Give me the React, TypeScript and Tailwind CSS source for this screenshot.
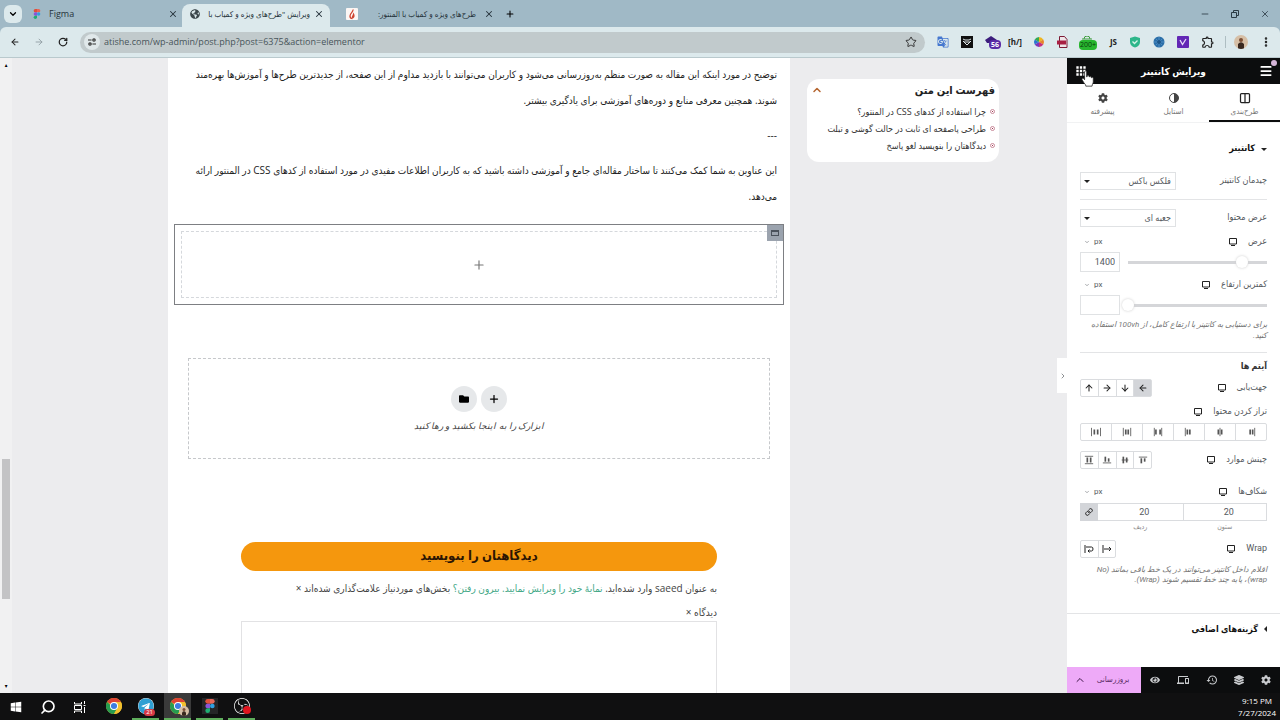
import React, { useState } from 'react';
import {
  ArrowDown,
  ArrowLeft,
  ArrowRight,
  ArrowUp,
  ChevronDown,
  ChevronLeft,
  ChevronUp,
  Columns2,
  EllipsisVertical,
  Link,
  Menu,
  Minus,
  Plus,
  RotateCw,
  Search,
  Star,
  X,
} from 'lucide-react';
import { FaCog, FaEye, FaFolder, FaGlobeAmericas, FaLayerGroup, FaTelegram, FaWindows } from 'react-icons/fa';
import { MdApps, MdDevices, MdGTranslate, MdHistory, MdOutlineExtension } from 'react-icons/md';
import { SiObsstudio } from 'react-icons/si';

const UI_FONT = "font-['Open_Sans','DejaVu_Sans_Condensed','DejaVu_Sans',sans-serif]";
const PANEL_FONT = "font-['Roboto','DejaVu_Sans_Condensed','DejaVu_Sans',sans-serif]";

/* ---------- Logos ---------- */

const FigmaLogo = ({ className }: { className?: string }) => (
  <svg viewBox="0 0 16 24" className={className}>
    <path d="M4 0h4v8H4a4 4 0 0 1 0-8z" fill="#e0503a" />
    <path d="M8 0h4a4 4 0 0 1 0 8H8z" fill="#e5685a" />
    <path d="M4 8h4v8H4a4 4 0 0 1 0-8z" fill="#8a55d8" />
    <circle cx="12" cy="12" r="4" fill="#2f9fe0" />
    <path d="M4 16h4v4a4 4 0 1 1-4-4z" fill="#1fae74" />
  </svg>
);

const ChromeLogo = ({ className }: { className?: string }) => (
  <svg viewBox="0 0 24 24" className={className}>
    <circle cx="12" cy="12" r="12" fill="#f2c02e" />
    <path d="M12 12 1.6 6A12 12 0 0 1 22.4 6z" fill="#dd4334" />
    <path d="M1.6 6A12 12 0 0 0 12 24l5.2-9H12z" fill="#279c50" />
    <path d="M12 6h10.4A12 12 0 0 1 12 24l5.2-9z" fill="#f2c02e" />
    <circle cx="12" cy="12" r="6" fill="#fff" />
    <circle cx="12" cy="12" r="4.6" fill="#3d7de0" />
  </svg>
);

const HandCursor = () => (
  <svg viewBox="0 0 16 20" className="absolute top-3 left-3.5 z-10 h-[17px] w-3.5">
    <path
      d="M4 2.2c0-1.6 2.4-1.6 2.4 0V8l.6-.1V7c0-1 2.1-1 2.2.2v1l.5-.1c.2-1 2-.8 2.1.4v.7l.5-.1c.3-.8 1.9-.6 1.9.8V14c0 2-1.4 2.6-1.4 5H5.4c0-2-1.2-2.6-2.2-4L1 11.4c-.6-1.2.8-2.2 1.8-1.3L4 11.4z"
      fill="#fff"
      stroke="#222"
      strokeWidth=".9"
    />
  </svg>
);

/* ---------- Browser ---------- */

const Tab = ({ icon, title, rtl, active, className }: { icon: React.ReactNode; title: string; rtl?: boolean; active?: boolean; className: string }) => (
  <div className={`flex items-center pb-1 text-[#26333b] ${active ? 'rounded-t-lg bg-[#dce9ec]' : ''} ${className}`}>
    {icon}
    <span dir={rtl ? 'rtl' : 'ltr'} className="min-w-0 flex-1 whitespace-nowrap">
      {title}
    </span>
    <button aria-label="Close tab">
      <X className="size-2.5" strokeWidth={2.5} />
    </button>
  </div>
);

const Browser = () => (
  <header className="shrink-0 bg-[#a0b9c6]">
    <div className="flex h-[27px] items-stretch pt-1 pl-1">
      <button aria-label="Search tabs" className="mt-px grid h-[18px] w-[18px] place-items-center rounded-md bg-[#dce9ec]">
        <ChevronDown className="size-2.5" strokeWidth={3} />
      </button>
      <Tab className="ml-[3px] w-[157px] gap-2 pr-1 pl-2 text-[9px]" icon={<FigmaLogo className="h-2.5 w-2" />} title="Figma" />
      <Tab
        className="w-[148px] gap-1 pr-1.5 pl-2 text-[8px]"
        active
        rtl
        icon={<FaGlobeAmericas className="size-2.5 shrink-0 text-[#3c474c]" />}
        title="ویرایش &quot;طرح‌های ویژه و کمیاب با"
      />
      <Tab
        className="ml-4 w-[152px] gap-2 pr-1 text-[8px]"
        rtl
        icon={
          <svg viewBox="0 0 12 12" className="size-3 shrink-0">
            <rect width="12" height="12" rx="1" fill="#fbf6f4" />
            <path d="M7 1.500C7.500 4 4 5 4 8c0 1.600 1 2.600 2.400 2.600" fill="none" stroke="#cf4430" strokeWidth="1.300" />
            <path d="M7 4.500c2 1.500 2.500 5.500-.6 6.100C4.500 9 7.500 7.500 7 4.500z" fill="#cf4430" />
          </svg>
        }
        title="طرح‌های ویژه و کمیاب با المنتور:"
      />
      <button aria-label="New tab" className="mb-1 ml-px px-1.5">
        <Plus className="size-2.5" strokeWidth={2.5} />
      </button>
      <div className="mr-2.5 mb-1 ml-auto flex items-center gap-5 text-[#2c3b44]">
        <button aria-label="Minimize"><Minus className="size-2.5" /></button>
        <button aria-label="Restore">
          <svg viewBox="0 0 10 10" className="size-2.5" fill="none" stroke="currentColor">
            <path d="M1.500 3.500h5v5h-5zM3.500 3V1.500h5v5H7" />
          </svg>
        </button>
        <button aria-label="Close"><X className="size-2.5" /></button>
      </div>
    </div>

    <div className="flex h-[31px] items-center rounded-t-md border-b border-[#b9c9cd] bg-[#dce9ec] pr-2 pl-2.5 text-[#222]">
      <div className="flex gap-3.5">
        <button aria-label="Back"><ArrowLeft className="size-2.5" strokeWidth={2.5} /></button>
        <button aria-label="Forward" className="text-[#8b999e]"><ArrowRight className="size-2.5" /></button>
        <button aria-label="Reload"><RotateCw className="size-2.5" strokeWidth={3} /></button>
      </div>
      <div className="ml-3 flex h-[21px] flex-1 items-center rounded-full bg-[#c1cacc] pr-2 pl-1">
        <span className="grid size-4 shrink-0 place-items-center rounded-full bg-[#e0e8ea]">
          <svg viewBox="0 0 10 10" className="size-2" fill="none" stroke="#333" strokeWidth="1.500">
            <path d="M0 2.500h4.500M5.500 7.500H10" />
            <circle cx="7.500" cy="2.500" r="1.500" />
            <circle cx="2.500" cy="7.500" r="1.500" />
          </svg>
        </span>
        <input
          aria-label="Address"
          readOnly
          value="atishe.com/wp-admin/post.php?post=6375&action=elementor"
          className="ml-1 w-full bg-transparent text-[9px] text-[#48555a] outline-none"
        />
        <button aria-label="Bookmark"><Star className="size-3 text-[#333]" /></button>
      </div>
      <div className="ml-3 flex items-center gap-3">
        <MdGTranslate className="size-3 text-[#4678cf]" />
        <svg viewBox="0 0 12 12" className="size-3">
          <rect width="12" height="12" fill="#111" />
          <path d="M2 3l2 1h4l2-1M2 5l4 4 4-4M3 6h6" fill="none" stroke="#dfe8ea" />
        </svg>
        <span className="relative size-3">
          <svg viewBox="0 0 12 12" className="size-3"><path d="M6 0l6 4-2 3H2L0 4z" fill="#3b1c7c" /></svg>
          <span className="absolute top-1 left-1 rounded-sm bg-[#5a2ba6] px-0.5 text-[7px] leading-[9px] font-bold text-white">56</span>
        </span>
        <span className="flex w-3 justify-center text-[8px] leading-3 font-bold whitespace-nowrap">[h/]</span>
        <svg viewBox="0 0 12 12" className="size-3">
          <path d="M6 6V1a5 5 0 0 1 4.300 2.500z" fill="#f0b51e" />
          <path d="M6 6l4.300-2.500a5 5 0 0 1 0 5z" fill="#e8842a" />
          <path d="M6 6l4.300 2.500A5 5 0 0 1 6 11z" fill="#c62f7e" />
          <path d="M6 6v5a5 5 0 0 1-4.300-2.500z" fill="#7b35b8" />
          <path d="M6 6L1.700 8.500a5 5 0 0 1 0-5z" fill="#2b74cf" />
          <path d="M6 6L1.700 3.500A5 5 0 0 1 6 1z" fill="#34a853" />
        </svg>
        <svg viewBox="0 0 12 12" className="size-3">
          <path d="M2.500.5h5l2.500 3v8h-7.500z" fill="#efe5e8" stroke="#7c1a35" />
          <rect x="0" y="4.500" width="9" height="4" fill="#a81f42" />
        </svg>
        <span className="relative size-3">
          <svg viewBox="0 0 12 12" className="size-3" fill="none" stroke="#3c9c3c"><path d="M1 3h10M3 3a3 3 0 0 1 6 0" /></svg>
          <span className="absolute top-1 -left-0.5 rounded-sm bg-[#28b62f] px-px text-[7px] leading-[10px] text-[#083c0c]">200+</span>
        </span>
        <span className="flex w-3 justify-end text-[8px] leading-3 font-bold">JS</span>
        <svg viewBox="0 0 12 12" className="size-3">
          <path d="M6 .5l5 1.500v4c0 3-2 4.500-5 5.500C3 10.500 1 9 1 6V2z" fill="#2db68a" />
          <path d="M3.500 5.500l2 2 3-3" fill="none" stroke="#d7f3e8" strokeWidth="1.300" />
        </svg>
        <svg viewBox="0 0 12 12" className="size-3">
          <circle cx="6" cy="6" r="5.500" fill="#2a6ea8" />
          <path d="M6 1v10M1 6h10M2.500 2.500l7 7M9.500 2.500l-7 7" stroke="#5b9acb" strokeWidth=".7" />
          <circle cx="6" cy="6" r="2" fill="#1d5587" />
        </svg>
        <svg viewBox="0 0 12 12" className="size-3">
          <rect width="12" height="12" rx="1" fill="#6227b5" />
          <path d="M3 4l2.500 4.500L9 3" fill="none" stroke="#e6dcf6" strokeWidth="1.300" />
        </svg>
        <MdOutlineExtension className="size-3.5" />
        <span className="-ml-0.5 h-3 w-px bg-[#aebec2]" />
        <svg viewBox="0 0 14 14" className="-ml-1 size-3.5">
          <circle cx="7" cy="7" r="7" fill="#d6bfa6" />
          <circle cx="7" cy="5" r="2" fill="#7b4f35" />
          <path d="M4 13.200V9q3-3.500 6 0v4.200a7 7 0 0 1-6 0z" fill="#39281f" />
        </svg>
        <button aria-label="Menu"><EllipsisVertical className="size-3" strokeWidth={3} /></button>
      </div>
    </div>
  </header>
);

/* ---------- Page being edited ---------- */

const toc = ['چرا استفاده از کدهای CSS در المنتور؟', 'طراحی پاصفحه ای ثابت در حالت گوشی و تبلت', 'دیدگاهتان را بنویسید لغو پاسخ'];

const Preview = () => (
  <div className="flex min-w-0 flex-1 bg-[#ececee]">
    <div className="flex w-3 shrink-0 flex-col items-center bg-[#f1f1f2] py-1 text-[6px] leading-none text-black">
      <span>▴</span>
      <div className="mt-[391px] h-[140px] w-2 bg-[#c3c3c5]" />
      <span className="mt-auto">▾</span>
    </div>

    <main dir="rtl" className="ml-[156px] flex min-w-0 flex-1 flex-col overflow-hidden bg-white pt-[3px] text-[#222]">
      <article className="space-y-[9px] px-[13px] text-[10px] leading-[26px] whitespace-nowrap">
        <p>
          توضیح در مورد اینکه این مقاله به صورت منظم به‌روزرسانی می‌شود و کاربران می‌توانند با بازدید مداوم از این صفحه، از جدیدترین طرح‌ها و آموزش‌ها بهره‌مند
          <br />
          شوند. همچنین معرفی منابع و دوره‌های آموزشی برای یادگیری بیشتر.
        </p>
        <p>---</p>
        <p>
          این عناوین به شما کمک می‌کنند تا ساختار مقاله‌ای جامع و آموزشی داشته باشید که به کاربران اطلاعات مفیدی در مورد استفاده از کدهای CSS در المنتور ارائه
          <br />
          می‌دهد.
        </p>
      </article>

      <section className="relative mx-1.5 mt-[15px] border border-[#7d7f83] p-1.5">
        <button aria-label="Edit container" className="absolute top-0 right-0 grid size-4 place-items-center bg-[#9ba3ae]">
          <span className="h-1.5 w-2 border border-t-2 border-[#4a515b]" />
        </button>
        <div className="grid h-[67px] place-items-center border border-dashed border-[#d5d8dc]">
          <Plus className="size-3.5 text-[#777]" />
        </div>
      </section>

      <section className="mx-5 mt-[53px] flex h-[101px] shrink-0 flex-col items-center border border-dashed border-[#c6c8cb] pt-[27px]">
        <div className="flex gap-1">
          <button aria-label="Add section" className="grid size-[26px] place-items-center rounded-full bg-[#e6e8ea] text-black">
            <Plus className="size-3" strokeWidth={2.5} />
          </button>
          <button aria-label="Template library" className="grid size-[26px] place-items-center rounded-full bg-[#e6e8ea] text-black">
            <FaFolder className="size-2.5" />
          </button>
        </div>
        <p className="mt-2 text-[9px] leading-3 text-[#444] italic">ابزارک را به اینجا بکشید و رها کنید</p>
      </section>

      <section className="mx-[73px] mt-[83px] text-[10px] text-[#444]">
        <h3 className="rounded-full bg-[#f5970d] pb-[3px] text-center text-[13px] leading-[26px] font-bold text-[#2b1503]">دیدگاهتان را بنویسید</h3>
        <p className="mt-[7px] leading-5 whitespace-nowrap">
          به عنوان saeed وارد شده‌اید.{' '}
          <a href="#profile" className="text-[#45a888]">نمایهٔ خود را ویرایش نمایید.</a>{' '}
          <a href="#logout" className="text-[#45a888]">بیرون رفتن؟</a> بخش‌های موردنیاز علامت‌گذاری شده‌اند ×
        </p>
        <label htmlFor="comment" className="mt-[6px] block leading-4">دیدگاه ×</label>
        <textarea id="comment" className="mt-px block h-24 w-full resize-none border border-[#e2e2e4]" />
      </section>
    </main>

    <aside dir="rtl" className="mt-[21px] mr-[68px] ml-[17px] w-48 shrink-0 self-start rounded-xl bg-white px-1 pt-0.5 pb-2">
      <div className="flex items-center justify-between">
        <h4 className="text-[11px] leading-[18px] font-bold text-[#222]">فهرست این متن</h4>
        <button aria-label="Toggle table of contents"><ChevronUp className="size-3 text-[#b5652f]" strokeWidth={3} /></button>
      </div>
      <ul className="mt-1 text-[9px] text-[#333]">
        {toc.map((item) => (
          <li key={item} className="flex h-[17px] items-center gap-1 whitespace-nowrap">
            <span className="grid size-[5px] place-items-center rounded-full border border-[#c98a9a]">
              <span className="size-px bg-[#a13650]" />
            </span>
            <a href="#toc">{item}</a>
          </li>
        ))}
      </ul>
    </aside>
  </div>
);

/* ---------- Elementor panel ---------- */

const DeviceIcon = () => (
  <svg viewBox="0 0 10 10" className="size-2.5" fill="none" stroke="#222">
    <path d="M1.500 1.500h7v5.500h-7zM3 8.500h4" />
  </svg>
);

const Label = ({ children, device = true, htmlFor }: { children: React.ReactNode; device?: boolean; htmlFor?: string }) => (
  <label htmlFor={htmlFor} className="flex items-center gap-2.5 whitespace-nowrap">
    {children}
    {device && <DeviceIcon />}
  </label>
);

const Unit = () => (
  <button dir="ltr" className="flex items-center gap-1 pl-1 text-[8px]">
    <ChevronDown className="size-1.5" /> px
  </button>
);

const SelectRow = ({ id, label, value, className }: { id: string; label: string; value: string; className: string }) => (
  <div className={`flex items-center justify-between ${className}`}>
    <Label htmlFor={id} device={false}>{label}</Label>
    <div className="relative">
      <select id={id} className="block h-[18px] w-24 appearance-none border border-[#e0e2e4] bg-white px-1 text-[9px] leading-4">
        <option>{value}</option>
      </select>
      <span className="pointer-events-none absolute top-2 left-1 border-x-3 border-t-3 border-x-transparent border-t-[#222]" />
    </div>
  </div>
);

const SliderRow = ({ id, label, value, initial }: { id: string; label: string; value: string; initial: number }) => {
  const [pos, setPos] = useState(initial);
  return (
    <>
      <div className="flex h-3 items-center justify-between">
        <Label htmlFor={id}>{label}</Label>
        <Unit />
      </div>
      <div dir="ltr" className="mt-1 flex items-center">
        <input id={id} defaultValue={value} className="h-5 w-10 shrink-0 border border-[#e0e2e4] pr-1 text-right" />
        <input
          type="range"
          aria-label={label}
          value={pos}
          onChange={(e) => setPos(Number(e.target.value))}
          className="ml-0.5 h-3.5 min-w-0 flex-1 appearance-none bg-[linear-gradient(#d5d6d9,#d5d6d9)] bg-[length:calc(100%-6px)_3px] bg-right bg-no-repeat [&::-webkit-slider-thumb]:size-3 [&::-webkit-slider-thumb]:appearance-none [&::-webkit-slider-thumb]:rounded-full [&::-webkit-slider-thumb]:bg-white [&::-webkit-slider-thumb]:shadow-[0_0_3px_#ccc]"
        />
      </div>
    </>
  );
};

// vertical bars drawn as [x, y, width, height] in a 12x12 box
const justify: [string, number[][]][] = [
  ['شروع', [[4, 3, 2, 6], [7, 3, 2, 6], [10, 1, 1, 10]]],
  ['وسط', [[3, 3, 2, 6], [5.5, 1, 1, 10], [7, 3, 2, 6]]],
  ['پایان', [[1, 1, 1, 10], [3, 3, 2, 6], [6, 3, 2, 6]]],
  ['فاصله بین', [[1, 1, 1, 10], [2.5, 3, 2, 6], [7.5, 3, 2, 6], [10, 1, 1, 10]]],
  ['فاصله اطراف', [[1, 1, 1, 10], [3.5, 3, 2, 6], [6.5, 3, 2, 6], [10, 1, 1, 10]]],
  ['فاصله یکسان', [[0, 1, 1, 10], [3, 3, 2, 6], [7, 3, 2, 6], [11, 1, 1, 10]]],
];

const align: [string, number[][]][] = [
  ['بالا', [[1, 2, 10, 1], [3, 4, 2, 6], [7, 4, 2, 4]]],
  ['میانه', [[2, 5.5, 8, 1], [3, 2, 2, 8], [7, 3, 2, 6]]],
  ['پایین', [[1, 9, 10, 1], [3, 2, 2, 6], [7, 4, 2, 4]]],
  ['کشیده', [[1, 1, 10, 1], [3, 3, 2, 6], [7, 3, 2, 6], [1, 10, 10, 1]]],
];

const Bars = ({ rects }: { rects: number[][] }) => (
  <svg viewBox="0 0 12 12" className="size-2.5" fill="#555">
    {rects.map(([x, y, w, h]) => (
      <rect key={`${x}-${y}`} x={x} y={y} width={w} height={h} />
    ))}
  </svg>
);

const directions = [
  { name: 'ردیف', Icon: ArrowLeft },
  { name: 'ستون', Icon: ArrowDown },
  { name: 'ردیف معکوس', Icon: ArrowRight },
  { name: 'ستون معکوس', Icon: ArrowUp },
];

const groupCls = 'flex h-[18px] divide-x divide-[#dadcdf] border border-[#dadcdf] rounded-xs';

const Panel = () => {
  const [direction, setDirection] = useState(0);

  return (
    <aside dir="rtl" className={`relative flex w-[213px] shrink-0 flex-col bg-white text-[9px] text-[#55595e] ${PANEL_FONT}`}>
      <button aria-label="Hide panel" className="absolute top-[300px] -left-[10px] grid h-[35px] w-[11px] place-items-center bg-white">
        <ChevronLeft className="size-2 rotate-180" />
      </button>

      <header className="relative flex h-[26px] items-center justify-between bg-[#0c0d0e] px-[7px] text-white">
        <button aria-label="Menu" className="relative">
          <Menu className="size-3.5" strokeWidth={3} />
          <span className="absolute -top-1 -right-1 size-1.5 rounded-full bg-[#d5b5d8]" />
        </button>
        <h2 className="text-[10px] font-bold">ویرایش کانتینر</h2>
        <div dir="ltr">
          <button aria-label="Widgets" className="block"><MdApps className="size-3.5" /></button>
          <HandCursor />
        </div>
      </header>

      <nav className="grid h-[39px] grid-cols-3 border-b border-[#f1f2f3] text-[8px] text-[#777]">
        <button className="flex flex-col items-center gap-0.5 border-b-2 border-[#0c0d0e] pt-2">
          <Columns2 className="size-3 text-[#222]" strokeWidth={2.5} /> طرح‌بندی
        </button>
        <button className="flex flex-col items-center gap-0.5 pt-2">
          <svg viewBox="0 0 12 12" className="size-3 text-[#444]">
            <circle cx="6" cy="6" r="4.500" fill="none" stroke="currentColor" />
            <path d="M6 1.500a4.500 4.500 0 0 1 0 9z" fill="currentColor" />
          </svg>
          استایل
        </button>
        <button className="flex flex-col items-center gap-0.5 pt-2">
          <FaCog className="my-px size-2.5 text-[#444]" /> پیشرفته
        </button>
      </nav>

      <div className="flex-1 px-[13px] pt-[13px]">
        <button className="flex h-[26px] items-center gap-1.5 font-bold text-[#111]">
          <span className="border-x-3 border-t-3 border-x-transparent border-t-[#222]" /> کانتینر
        </button>
        <SelectRow id="layout" label="چیدمان کانتینر" value="فلکس باکس" className="h-[38px] border-b border-[#e3e4e6]" />
        <SelectRow id="content-width" label="عرض محتوا" value="جعبه ای" className="h-9" />
        <SliderRow id="width" label="عرض" value="1400" initial={86} />
        <div className="h-[7px]" />
        <SliderRow id="min-height" label="کمترین ارتفاع" value="" initial={0} />
        <p className="mt-1 pb-[11px] text-[8px] leading-[11px] text-[#777] italic">
          برای دستیابی به کانتینر با ارتفاع کامل، از 100vh استفاده کنید.
        </p>

        <h3 className="border-t border-[#e3e4e6] leading-[26px] font-bold text-[#333]">آیتم ها</h3>
        <div className="flex items-center justify-between">
          <Label>جهت‌یابی</Label>
          <div className={`w-[72px] ${groupCls}`}>
            {directions.map(({ name, Icon }, i) => (
              <button
                key={name}
                aria-label={name}
                onClick={() => setDirection(i)}
                className={`grid flex-1 place-items-center text-[#222] ${direction === i ? 'bg-[#d3d5d9]' : ''}`}
              >
                <Icon className="size-2.5" strokeWidth={2.5} />
              </button>
            ))}
          </div>
        </div>
        <div className="mt-2 flex h-3.5 items-center"><Label>تراز کردن محتوا</Label></div>
        <div className={`mt-1 ${groupCls}`}>
          {justify.map(([name, rects]) => (
            <button key={name} aria-label={name} className="grid flex-1 place-items-center"><Bars rects={rects} /></button>
          ))}
        </div>
        <div className="mt-2.5 flex items-center justify-between">
          <Label>چینش موارد</Label>
          <div className={`w-[72px] ${groupCls}`}>
            {align.map(([name, rects]) => (
              <button key={name} aria-label={name} className="grid flex-1 place-items-center"><Bars rects={rects} /></button>
            ))}
          </div>
        </div>

        <div className="mt-4 flex h-3.5 items-center justify-between">
          <Label>شکاف‌ها</Label>
          <Unit />
        </div>
        <div className="mt-1 flex">
          <div className="flex-1 text-center">
            <input id="gap-column" defaultValue="20" className="block h-[18px] w-full border border-[#dadcdf] pl-2 text-center" />
            <label htmlFor="gap-column" className="block text-[7px] leading-3 text-[#888]">ستون</label>
          </div>
          <div className="flex-1 text-center">
            <input id="gap-row" defaultValue="20" className="block h-[18px] w-full border-y border-[#dadcdf] pl-2 text-center" />
            <label htmlFor="gap-row" className="block text-[7px] leading-3 text-[#888]">ردیف</label>
          </div>
          <button aria-label="Link values" className="grid h-[18px] w-[18px] place-items-center bg-[#d3d5d9] text-[#222]">
            <Link className="size-2" strokeWidth={3} />
          </button>
        </div>

        <div className="mt-[7px] flex items-center justify-between">
          <Label>Wrap</Label>
          <div className={`w-9 ${groupCls}`}>
            <button aria-label="No wrap" className="grid flex-1 place-items-center">
              <svg viewBox="0 0 10 10" className="size-2.5" fill="none" stroke="#222"><path d="M1 1v8M2 5h7M7 3l2 2-2 2" /></svg>
            </button>
            <button aria-label="Wrap" className="grid flex-1 place-items-center">
              <svg viewBox="0 0 10 10" className="size-2.5" fill="none" stroke="#222"><path d="M1 1v8M2 3h5.500q1.500 0 1.500 2T7.500 7H4M5.500 5.500L4 7l1.500 1.500" /></svg>
            </button>
          </div>
        </div>
        <p className="mt-[7px] text-[8px] leading-[10px] text-[#777] italic">
          اقلام داخل کانتینر می‌توانند در یک خط باقی بمانند (No wrap)، یا به چند خط تقسیم شوند (Wrap).
        </p>
      </div>

      <button className="flex h-[54px] items-start gap-1.5 border-t border-[#e3e4e6] px-[13px] pt-2 leading-[14px] font-bold text-[#111]">
        <span className="mt-1 border-y-3 border-r-3 border-y-transparent border-r-[#222]" /> گزینه‌های اضافی
      </button>

      <footer className="flex h-[26px] shrink-0 items-stretch bg-[#0c0d0e] text-[#c9cbce]">
        <div className="flex flex-1 items-center justify-between px-[9px]">
          <button aria-label="Settings"><FaCog className="size-2.5" /></button>
          <button aria-label="Structure"><FaLayerGroup className="size-2.5" /></button>
          <button aria-label="History"><MdHistory className="size-3" /></button>
          <button aria-label="Responsive"><MdDevices className="size-3" /></button>
          <button aria-label="Preview"><FaEye className="size-2.5" /></button>
        </div>
        <button className="w-[52px] bg-[#eeaaf8] pr-1 text-[8px] text-[#5b2c66]">بروزرسانی</button>
        <button aria-label="Save options" className="grid w-[22px] place-items-center bg-[#eeaaf8] pl-1 text-[#3b1545]">
          <ChevronUp className="size-3" />
        </button>
      </footer>
    </aside>
  );
};

/* ---------- Windows taskbar ---------- */

const appCls = 'grid w-[27px] place-items-center border-b-2 mr-[5px]';

const Taskbar = () => (
  <footer className="flex h-[27px] shrink-0 items-stretch bg-[#101011] text-white">
    <button aria-label="Start" className="grid w-8 place-items-center"><FaWindows className="size-3" /></button>
    <button aria-label="Search" className="grid w-8 place-items-center"><Search className="size-4 -scale-x-100" strokeWidth={2.5} /></button>
    <button aria-label="Task view" className="mr-1 grid w-8 place-items-center">
      <svg viewBox="0 0 12 12" className="size-3" fill="none" stroke="#fff">
        <path d="M.5 1v2h7V1M.5 4.500h7v4h-7zM.5 12v-2h7v2M10.500 0v3M10.500 6v6M9.500 4.500h2" />
      </svg>
    </button>
    <button aria-label="Chrome" className={`${appCls} border-transparent`}><ChromeLogo className="size-4" /></button>
    <button aria-label="Telegram" className={`${appCls} relative border-[#5fae5c]`}>
      <FaTelegram className="size-4 rounded-full bg-white text-[#2f9fd3]" />
      <span className="absolute right-1 bottom-0.5 rounded-sm bg-[#d83a45] px-0.5 text-[6px] leading-[7px]">21</span>
    </button>
    <button aria-label="Chrome profile" className={`${appCls} relative border-[#5fae5c] bg-[#3a3a3a]`}>
      <ChromeLogo className="size-4" />
      <svg viewBox="0 0 10 10" className="absolute right-0.5 bottom-0.5 size-2.5">
        <circle cx="5" cy="5" r="5" fill="#d6bfa6" />
        <circle cx="5" cy="3.500" r="1.500" fill="#7b4f35" />
        <path d="M3 9.500V6.500q2-2.500 4 0v3a5 5 0 0 1-4 0z" fill="#39281f" />
      </svg>
    </button>
    <button aria-label="Figma" className={`${appCls} border-[#5fae5c]`}>
      <span className="grid size-4 place-items-center bg-[#252527]"><FigmaLogo className="h-3.5 w-2.5" /></span>
    </button>
    <button aria-label="OBS Studio" className={`${appCls} relative border-[#5fae5c]`}>
      <SiObsstudio className="size-4" />
      <span className="absolute right-1 bottom-1 size-2 rounded-full bg-[#e0151f]" />
    </button>
    <div className="mr-1 ml-auto flex flex-col justify-center text-right text-[8px] leading-3 whitespace-nowrap">
      <span className="pr-1">9:15 PM</span>
      <span>7/27/2024</span>
    </div>
  </footer>
);

export default function App() {
  return (
    <div className={`flex h-screen flex-col overflow-hidden ${UI_FONT}`}>
      <Browser />
      <div className="flex min-h-0 flex-1">
        <Preview />
        <Panel />
      </div>
      <Taskbar />
    </div>
  );
}
